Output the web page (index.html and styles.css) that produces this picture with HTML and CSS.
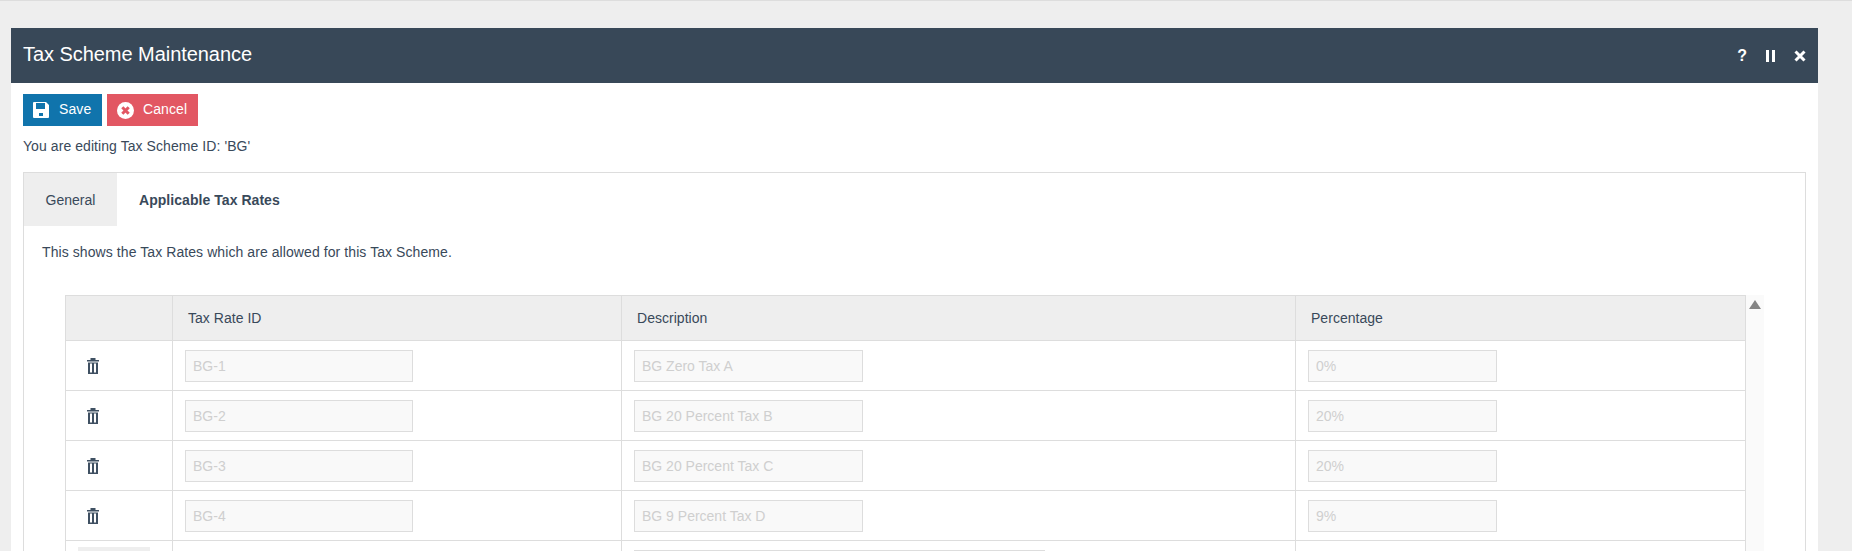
FILE: index.html
```html
<!DOCTYPE html>
<html lang="en">
<head>
<meta charset="utf-8">
<title>Tax Scheme Maintenance</title>
<link rel="stylesheet" href="styles.css">
</head>
<body>
<main class="window">
  <header class="titlebar">
    <h1 class="title">Tax Scheme Maintenance</h1>
    <div class="title-actions">
      <span class="title-help">?</span>
      <svg class="ico-pause" viewBox="0 0 9 12"><rect x="0" y="0" width="3" height="12"/><rect x="6" y="0" width="3" height="12"/></svg>
      <svg class="ico-close" viewBox="0 0 12 12"><path d="M1.500 1.500 10.500 10.500M10.500 1.500 1.500 10.500"/></svg>
    </div>
  </header>
  <section class="content">
    <div class="toolbar">
      <button class="btn btn-save">
        <svg class="ico-btn" viewBox="0 0 16 16"><path fill-rule="evenodd" d="M1 0h12l3 3v12a1 1 0 0 1-1 1H1a1 1 0 0 1-1-1V1a1 1 0 0 1 1-1zM3 1v6h9V1zM6 11v3h4v-3z"/></svg>
        <span class="btn-label">Save</span>
      </button>
      <button class="btn btn-cancel">
        <svg class="ico-btn-lg" viewBox="0 0 17 17"><circle cx="8.500" cy="8.500" r="8.500" fill="#fff"/><path d="M5.300 5.300l6.400 6.400M11.700 5.300l-6.400 6.400" stroke="#e25763" stroke-width="3" fill="none"/></svg>
        <span class="btn-label">Cancel</span>
      </button>
    </div>
    <p class="editing">You are editing Tax Scheme ID: 'BG'</p>
    <div class="tabbox">
      <nav class="tabs">
        <span class="tab tab-off">General</span>
        <span class="tab tab-on">Applicable Tax Rates</span>
      </nav>
      <div class="tabbody">
        <p class="intro">This shows the Tax Rates which are allowed for this Tax Scheme.</p>
        <div class="gridwrap">
          <table class="grid">
            <colgroup><col class="c1"><col class="c2"><col class="c3"><col class="c4"></colgroup>
            <thead>
              <tr><th></th><th>Tax Rate ID</th><th>Description</th><th>Percentage</th></tr>
            </thead>
            <tbody>
              <tr>
                <td class="cell-del"><svg class="ico-trash" viewBox="0 0 12 16"><use href="#trash"/></svg></td>
                <td><input class="field f-id" disabled placeholder="BG-1"></td>
                <td><input class="field f-desc" disabled placeholder="BG Zero Tax A"></td>
                <td><input class="field f-pct" disabled placeholder="0%"></td>
              </tr>
              <tr>
                <td class="cell-del"><svg class="ico-trash" viewBox="0 0 12 16"><use href="#trash"/></svg></td>
                <td><input class="field f-id" disabled placeholder="BG-2"></td>
                <td><input class="field f-desc" disabled placeholder="BG 20 Percent Tax B"></td>
                <td><input class="field f-pct" disabled placeholder="20%"></td>
              </tr>
              <tr>
                <td class="cell-del"><svg class="ico-trash" viewBox="0 0 12 16"><use href="#trash"/></svg></td>
                <td><input class="field f-id" disabled placeholder="BG-3"></td>
                <td><input class="field f-desc" disabled placeholder="BG 20 Percent Tax C"></td>
                <td><input class="field f-pct" disabled placeholder="20%"></td>
              </tr>
              <tr>
                <td class="cell-del"><svg class="ico-trash" viewBox="0 0 12 16"><use href="#trash"/></svg></td>
                <td><input class="field f-id" disabled placeholder="BG-4"></td>
                <td><input class="field f-desc" disabled placeholder="BG 9 Percent Tax D"></td>
                <td><input class="field f-pct" disabled placeholder="9%"></td>
              </tr>
              <tr>
                <td class="cell-add"><span class="add-btn"></span></td>
                <td></td>
                <td><input class="field f-wide" disabled></td>
                <td></td>
              </tr>
            </tbody>
          </table>
          <div class="scroller"><svg class="ico-up" viewBox="0 0 12 9"><path d="M6 0 12 9H0z"/></svg></div>
        </div>
      </div>
    </div>
  </section>
</main>
<svg class="defs" width="0" height="0"><defs><symbol id="trash" viewBox="0 0 12 16"><path fill-rule="evenodd" d="M3.500 0h5v2H12v1.500H0V2h3.500zM1 4.500h10V16H1zM3 5.500v9h2v-9zM7 5.500v9h2v-9z"/></symbol></defs></svg>
</body>
</html>
```
FILE: styles.css
```css
* { box-sizing: border-box; }
html, body { margin: 0; height: 551px; overflow: hidden; }
body {
  background: #eee;
  border-top: 1px solid #ddd;
  padding: 27px 34px 0 11px;
  font-family: "Liberation Sans", Arial, sans-serif;
  font-size: 14px;
  color: #39495a;
}
.defs { position: absolute; }
.window { background: #fff; height: 600px; }
.titlebar {
  height: 55px;
  background: #384858;
  color: #fff;
  display: flex;
  align-items: center;
  justify-content: space-between;
  padding: 0 12px 2px;
}
.title { margin: 0; font-size: 20px; font-weight: 400; letter-spacing: -0.05px; }
.title-actions { display: flex; align-items: center; gap: 19px; padding-top: 2px; }
.title-help { font-size: 16px; font-weight: 700; line-height: 16px; }
.ico-pause { width: 9px; height: 12px; fill: #fff; }
.ico-close { width: 12px; height: 12px; stroke: #fff; stroke-width: 3; fill: none; }
.content { padding: 11px 12px 0; }
.toolbar { display: flex; gap: 5px; }
.btn {
  height: 32px;
  border: 0;
  color: #fff;
  font: inherit;
  letter-spacing: 0.1px;
  display: flex;
  align-items: center;
  gap: 10px;
  padding: 0 0 0 10px;
}
.btn-label { margin-bottom: 2px; }
.btn-save { background: #1074ac; width: 79px; }
.btn-cancel { background: #e25763; width: 91px; gap: 9px; }
.ico-btn { width: 16px; height: 16px; fill: #fff; flex: none; }
.ico-btn-lg { width: 17px; height: 17px; flex: none; }
.editing { margin: 10px 0 0; line-height: 20px; letter-spacing: 0.07px; }
.tabbox { margin-top: 16px; border: 1px solid #ddd; }
.tabs { display: flex; height: 53px; }
.tab { display: flex; align-items: center; height: 53px; }
.tab-off { background: #eee; width: 93px; justify-content: center; }
.tab-on { font-weight: 700; padding-left: 22px; letter-spacing: 0.05px; }
.tabbody { padding: 0 0 0 18px; }
.intro { margin: 16px 0 0; line-height: 20px; letter-spacing: 0.08px; }
.gridwrap { display: flex; margin: 33px 0 0 23px; }
.grid { border-collapse: collapse; table-layout: fixed; width: 1680px; }
.c1 { width: 107px; }
.c2 { width: 449px; }
.c3 { width: 674px; }
.c4 { width: 450px; }
.grid th, .grid td { border: 1px solid #ddd; padding: 0; }
.grid th {
  background: #eee;
  height: 45px;
  font-weight: 400;
  text-align: left;
  padding-left: 15px;
  border-bottom: 0;
  letter-spacing: 0.03px;
}
.grid td { height: 50px; padding-left: 12px; }
.grid td.cell-del { padding-left: 21px; }
.field {
  display: block;
  height: 32px;
  border: 1px solid #ddd;
  background: #f9f9f9;
  font: inherit;
  padding: 0 7px;
}
.field::placeholder { color: #cfcfcf; opacity: 1; }
.f-id { width: 228px; }
.f-desc { width: 229px; }
.f-pct { width: 189px; }
.f-wide { width: 411px; }
.ico-trash { width: 12px; height: 16px; fill: #3f5062; display: block; }
.grid td.cell-add { padding-left: 12px; vertical-align: top; padding-top: 6px; }
.add-btn { display: block; width: 72px; height: 30px; background: #eee; }
.scroller { width: 18px; background: #fafafa; padding: 5px 3px 0; }
.ico-up { display: block; width: 12px; height: 9px; fill: #858585; }
```
